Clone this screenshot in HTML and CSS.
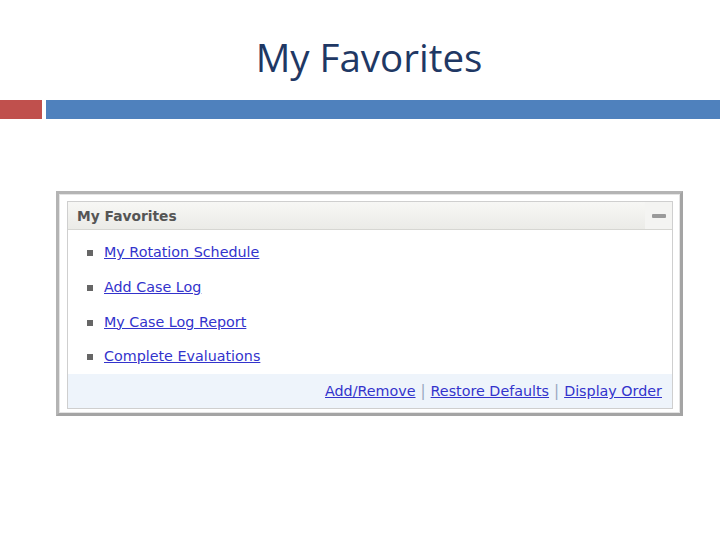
FILE: index.html
```html
<!DOCTYPE html>
<html>
<head>
<meta charset="utf-8">
<link rel="stylesheet" href="styles.css">
</head>
<body>
<div class="slide">
  <h1 class="title">My Favorites</h1>
  <div class="bars">
    <div class="bar-red"></div>
    <div class="bar-blue"></div>
  </div>
  <div class="frame">
    <div class="panel">
      <div class="panel-head">
        <span class="panel-title">My Favorites</span>
        <span class="min-btn"><span class="min-icon"></span></span>
      </div>
      <ul class="fav-list">
        <li><a href="#">My Rotation Schedule</a></li>
        <li><a href="#">Add Case Log</a></li>
        <li><a href="#">My Case Log Report</a></li>
        <li><a href="#">Complete Evaluations</a></li>
      </ul>
      <div class="panel-foot">
        <a href="#">Add/Remove</a><span class="sep">|</span><a href="#">Restore Defaults</a><span class="sep">|</span><a href="#">Display Order</a>
      </div>
    </div>
  </div>
</div>
</body>
</html>
```

FILE: styles.css
```css
html, body {
  margin: 0;
  padding: 0;
  background: #ffffff;
}
.slide {
  width: 720px;
  height: 540px;
  overflow: hidden;
}
.title {
  margin: 0;
  padding: 35px 0 0 18px;
  height: 100px;
  box-sizing: border-box;
  text-align: center;
  font-family: "Open Sans", sans-serif;
  font-weight: 400;
  font-size: 38.5px;
  line-height: 44px;
  color: #1f3864;
}
.bars {
  display: flex;
  gap: 4px;
  height: 19px;
}
.bar-red {
  width: 42px;
  background: #c0504d;
}
.bar-blue {
  flex: 1;
  background: #4f81bd;
}
.frame {
  margin: 72px 0 0 56px;
  width: 627px;
  height: 225px;
  box-sizing: border-box;
  border: 3px solid #a4a4a4;
  border-top-color: #b4b4b4;
  border-left-color: #b4b4b4;
  box-shadow: inset 0 0 0 1px #e4e4e4;
  padding: 7px 7px 4px 8px;
  background: #fff;
}
.panel {
  height: 100%;
  box-sizing: border-box;
  border: 1px solid #cfcfcf;
  display: flex;
  flex-direction: column;
  font-family: "DejaVu Sans", sans-serif;
}
.panel-head {
  height: 27px;
  display: flex;
  align-items: center;
  justify-content: space-between;
  background: linear-gradient(#f7f7f5, #ebebe7);
  border-bottom: 1px solid #d6d6d2;
}
.panel-title {
  padding-left: 9px;
  font-size: 13.8px;
  font-weight: bold;
  color: #555555;
}
.min-btn {
  width: 27px;
  height: 27px;
  display: flex;
  align-items: center;
  justify-content: center;
  background: #f4f4f2;
}
.min-icon {
  width: 14px;
  height: 4px;
  background: #9a9a9a;
  border-radius: 1px;
}
.fav-list {
  list-style: none;
  margin: 0;
  padding: 5px 0 0 0;
  flex: 1;
}
.fav-list li {
  height: 34.7px;
  display: flex;
  align-items: center;
  padding-left: 19px;
}
.fav-list li::before {
  content: "";
  width: 6px;
  height: 6px;
  background: #666666;
  margin-right: 11px;
  margin-top: 2px;
}
a {
  color: #3333cc;
  text-decoration: underline;
  font-size: 14.3px;
}
.panel-foot {
  height: 34px;
  background: #eef4fb;
  display: flex;
  align-items: center;
  justify-content: flex-end;
  padding-right: 10px;
}
.sep {
  color: #9aa8c0;
  font-size: 15px;
  margin: 0 5px;
}
```
